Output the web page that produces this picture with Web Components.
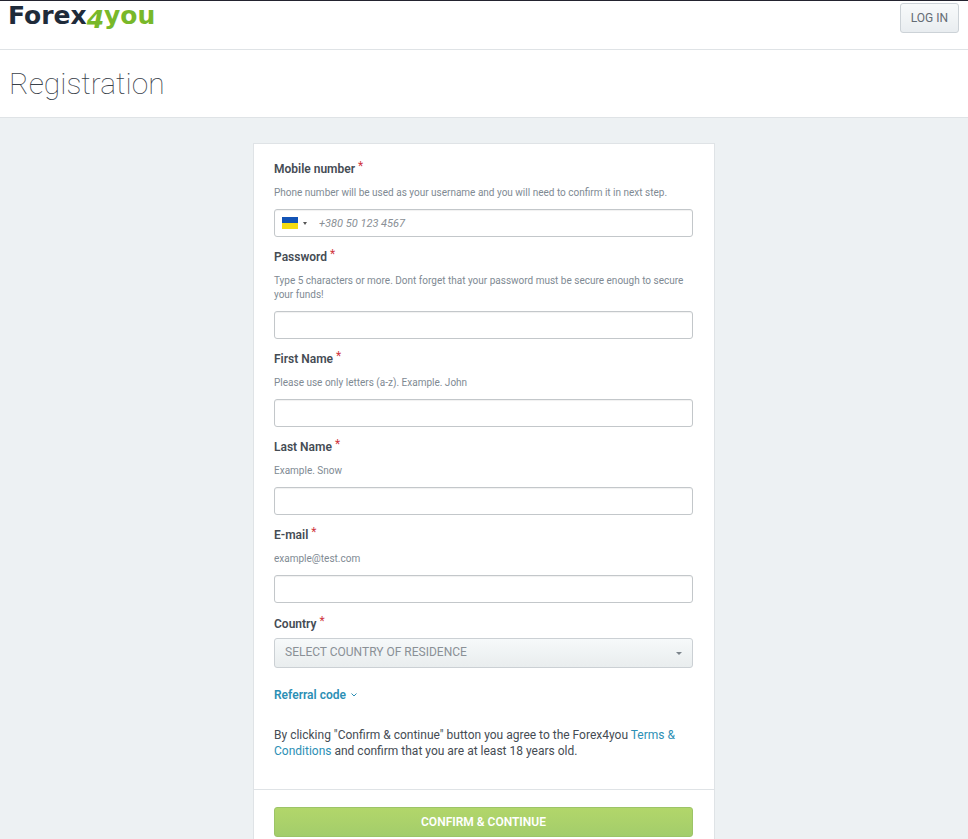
<!DOCTYPE html>
<html lang="en">
<head>
<meta charset="utf-8">
<meta name="viewport" content="width=device-width, initial-scale=1">
<title>Registration</title>
<style>
    html {
        height: 100%;
    }

    body {
        margin: 0;
        min-height: 100%;
        display: flex;
        flex-direction: column;
        background: #edf1f3;
        color: #454c54;
        font: 12px/16px Roboto, "Liberation Sans", sans-serif;
        --line: #dfe3e6;
        --field-border: #c3c7ca;
        --link: #2c8fb5;
    }
</style>
</head>
<body>
    <site-header></site-header>
    <page-title>Registration</page-title>
    <registration-form></registration-form>

<script>
const logoHtml = `
    <style>
        :host{
            display: block;
        }

        a{
            display: flex;
            align-items: flex-start;
            color: #1f2b3a;
            font: 700 25px/30px "DejaVu Sans", sans-serif;
            text-decoration: none;
        }

        .four{
            padding-top: 4px;
            font-style: italic;
        }

        .four, .you{
            color: #78b829;
        }
    </style>
    <a href="#" aria-label="Forex4you"><span>Forex</span><span class="four">4</span><span class="you">you</span></a>
`

const headerHtml = `
    <style>
        :host{
            display: block;
            background: #fff;
            border-top: 1px solid #23232f;
            border-bottom: 1px solid var(--line);
        }

        header{
            display: flex;
            justify-content: space-between;
            align-items: flex-start;
            min-height: 48px;
            padding: 0 9px 0 8px;
            box-sizing: border-box;
        }

        button{
            height: 30px;
            margin: 2px 0 0;
            padding: 0 10px;
            border: 1px solid #ccd2d7;
            border-radius: 3px;
            background: linear-gradient(#f8fafb, #e9edf0);
            color: #646c74;
            font: 12px/16px Roboto, sans-serif;
        }
    </style>
    <header>
        <site-logo></site-logo>
        <button type="button">LOG IN</button>
    </header>
`

const titleHtml = `
    <style>
        :host{
            display: block;
            padding: 14px 9px 13px;
            background: #fff;
            border-bottom: 1px solid var(--line);
        }

        h1{
            margin: 0;
            color: #39414a;
            font-size: 30px;
            font-weight: 100;
            line-height: 40px;
        }
    </style>
    <h1><slot></slot></h1>
`

const fieldStyle = `
    :host{
        display: block;
        margin-bottom: 12px;
    }

    label{
        display: block;
        height: 16px;
        font-weight: 600;
    }

    label span{
        color: #d0363f;
        font-weight: 400;
        position: relative;
        top: -3px;
    }

    p{
        margin: 9px 0;
        color: #808a93;
        font-size: 10px;
        line-height: 14px;
    }

    .box{
        display: flex;
        align-items: center;
        height: 28px;
        box-sizing: border-box;
        border: 1px solid var(--field-border);
        border-radius: 3px;
        background: #fff;
        box-shadow: inset 0 1px 1px rgba(0, 0, 0, .06);
        overflow: hidden;
    }

    .flag{
        display: flex;
        align-items: center;
        gap: 5px;
        height: 26px;
        padding: 0 7px;
        border: 0;
        background: none;
    }

    input{
        flex: 1;
        min-width: 0;
        height: 26px;
        padding: 0 5px;
        border: 0;
        outline: 0;
        background: none;
        color: inherit;
        font: 11px/16px Roboto, sans-serif;
    }

    input::placeholder{
        color: #8a9096;
        font-style: italic;
    }
`

const flagHtml = `
    <button type="button" class="flag" aria-label="Select country code">
        <svg width="16" height="12" viewBox="0 0 16 12">
            <rect width="16" height="6" fill="#1253b5"/>
            <rect y="6" width="16" height="6" fill="#f5dc11"/>
        </svg>
        <svg width="4" height="3" viewBox="0 0 4 3">
            <path d="M0 0h4L2 3z" fill="#555"/>
        </svg>
    </button>
`

const selectHtml = `
    <style>
        :host{
            display: block;
            margin-top: 13px;
        }

        label{
            display: block;
            height: 16px;
            margin-bottom: 6px;
            font-weight: 600;
        }

        label span{
            color: #d0363f;
            font-weight: 400;
            position: relative;
            top: -3px;
        }

        .box{
            display: grid;
            align-items: center;
        }

        select, svg{
            grid-area: 1 / 1;
        }

        select{
            appearance: none;
            width: 100%;
            height: 30px;
            margin: 0;
            padding: 0 24px 2px 10px;
            border: 1px solid #cbd0d4;
            border-radius: 3px;
            background: linear-gradient(#f6f9fa, #e9edee);
            color: #8a9096;
            font: 12px/16px Roboto, sans-serif;
        }

        svg{
            justify-self: end;
            margin-right: 11px;
            pointer-events: none;
        }
    </style>
    <label for="country">Country <span>*</span></label>
    <div class="box">
        <select id="country" required>
            <option>SELECT COUNTRY OF RESIDENCE</option>
        </select>
        <svg width="6" height="3" viewBox="0 0 6 3">
            <path d="M0 0h6L3 3z" fill="#7c848b"/>
        </svg>
    </div>
`

const formHtml = `
    <style>
        :host{
            display: flex;
            flex: 1;
            justify-content: center;
            padding-top: 25px;
        }

        form{
            width: 100%;
            max-width: 462px;
            box-sizing: border-box;
            border: 1px solid var(--line);
            border-bottom: 0;
            background: #fff;
        }

        .fields{
            padding: 17px 21px 30px 20px;
        }

        a{
            color: var(--link);
            text-decoration: none;
        }

        .referral{
            display: inline-flex;
            align-items: center;
            gap: 5px;
            margin-top: 19px;
            font-weight: 600;
        }

        .terms{
            margin: 24px 0 0;
        }

        footer{
            padding: 17px 21px 2px 20px;
            border-top: 1px solid var(--line);
        }

        footer button{
            display: block;
            width: 100%;
            height: 30px;
            margin: 0;
            border: 1px solid #9cc467;
            border-radius: 3px;
            background: linear-gradient(#b2d66a, #a3cd6b);
            color: #fff;
            font: 600 12px/16px Roboto, sans-serif;
        }
    </style>
    <form>
        <div class="fields">
            <text-field name="phone" type="tel" label="Mobile number" placeholder="+380 50 123 4567" flag>Phone number will be used as your username and you will need to confirm it in next step.</text-field>
            <text-field name="password" type="password" label="Password">Type 5 characters or more. Dont forget that your password must be secure enough to secure your funds!</text-field>
            <text-field name="first" type="text" label="First Name">Please use only letters (a-z). Example. John</text-field>
            <text-field name="last" type="text" label="Last Name">Example. Snow</text-field>
            <text-field name="email" type="email" label="E-mail">example@test.com</text-field>
            <country-select></country-select>
            <a class="referral" href="#">Referral code
                <svg width="6" height="4" viewBox="0 0 6 4" fill="none" stroke="currentColor">
                    <path d="M.5 .5L3 3L5.5 .5"/>
                </svg>
            </a>
            <p class="terms">By clicking "Confirm &amp; continue" button you agree to the Forex4you <a href="#">Terms &amp; Conditions</a> and confirm that you are at least 18 years old.</p>
        </div>
        <footer>
            <button type="submit">CONFIRM &amp; CONTINUE</button>
        </footer>
    </form>
`

class SiteLogo extends HTMLElement {
    constructor() {
        super();
        this.attachShadow({ mode: 'open' }).innerHTML = logoHtml;
    }
}

class SiteHeader extends HTMLElement {
    constructor() {
        super();
        this.attachShadow({ mode: 'open' }).innerHTML = headerHtml;
    }
}

class PageTitle extends HTMLElement {
    constructor() {
        super();
        this.attachShadow({ mode: 'open' }).innerHTML = titleHtml;
    }
}

class TextField extends HTMLElement {
    constructor() {
        super();
        this.attachShadow({ mode: 'open' });
    }

    connectedCallback() {
        let name = this.getAttribute('name');

        this.shadowRoot.innerHTML = `
            <style>${fieldStyle}</style>
            <label for="${name}">${this.getAttribute('label')} <span>*</span></label>
            <p id="help"><slot></slot></p>
            <div class="box">
                ${this.hasAttribute('flag') ? flagHtml : ''}
                <input id="${name}" name="${name}" type="${this.getAttribute('type')}"
                    placeholder="${this.getAttribute('placeholder') || ''}" aria-describedby="help" required>
            </div>
        `;
    }
}

class CountrySelect extends HTMLElement {
    constructor() {
        super();
        this.attachShadow({ mode: 'open' }).innerHTML = selectHtml;
    }
}

class RegistrationForm extends HTMLElement {
    constructor() {
        super();
        this.attachShadow({ mode: 'open' }).innerHTML = formHtml;
    }
}

window.customElements.define('site-logo', SiteLogo);
window.customElements.define('site-header', SiteHeader);
window.customElements.define('page-title', PageTitle);
window.customElements.define('text-field', TextField);
window.customElements.define('country-select', CountrySelect);
window.customElements.define('registration-form', RegistrationForm);
</script>
</body>
</html>
